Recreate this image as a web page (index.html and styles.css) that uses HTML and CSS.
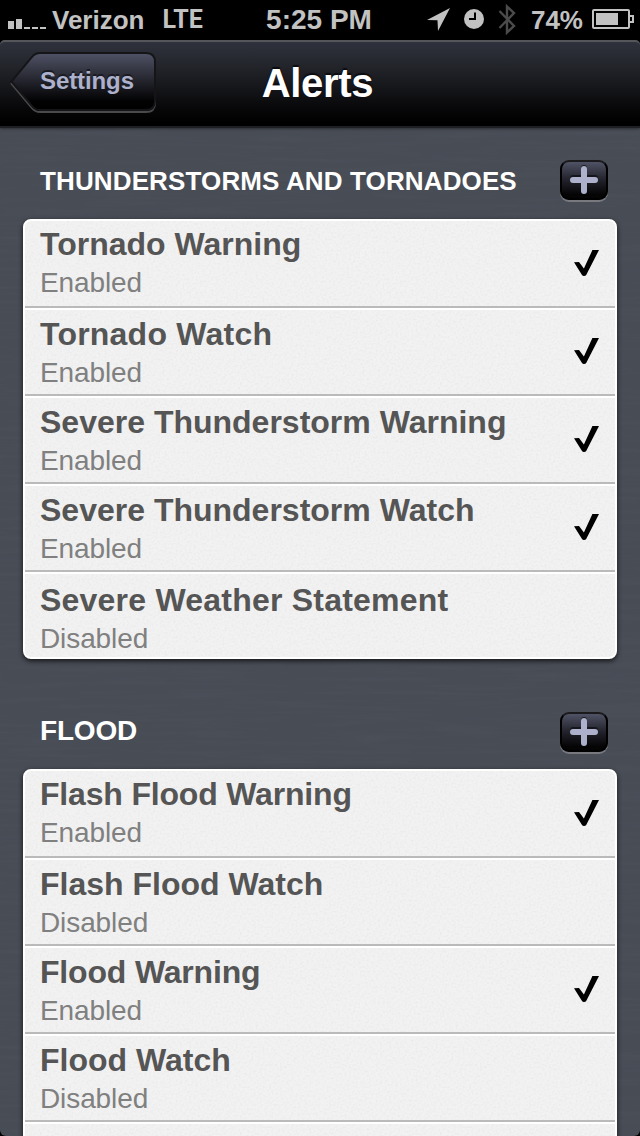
FILE: index.html
```html
<!DOCTYPE html>
<html lang="en">
<head>
  <meta charset="UTF-8" />
  <meta name="viewport" content="width=device-width, initial-scale=1.0"/>
  <title>Alerts</title>
  <link rel="stylesheet" href="styles.css">
</head>
<body>

<svg class="defs" width="0" height="0">
  <defs>
    <linearGradient id="btnFill" x1="0" y1="0" x2="0" y2="1">
      <stop offset="0" stop-color="#505366"/>
      <stop offset="0.5" stop-color="#22232b"/>
      <stop offset="0.85" stop-color="#020203"/>
      <stop offset="1" stop-color="#000"/>
    </linearGradient>
    <symbol id="check" viewBox="0 0 25 26">
      <path d="M0 12.3 L5 12 L9.9 18.6 L18.4 0 H25 L12.2 25 Q11.6 26 10 26 Q8.6 26 8 25 Z"/>
    </symbol>
  </defs>
</svg>

<div class="screen">
  <div class="status-bar">
    <div class="status-left">
      <svg class="signal" width="38" height="10" fill="#c2c2c2">
        <rect x="0" y="2" width="6" height="8"/>
        <rect x="8" y="0" width="6" height="10"/>
        <rect x="16" y="8" width="6" height="2"/>
        <rect x="24" y="8" width="6" height="2"/>
        <rect x="32" y="8" width="6" height="2"/>
      </svg>
      <span class="carrier">Verizon</span>
      <span class="network">LTE</span>
    </div>
    <span class="clock">5:25 PM</span>
    <div class="status-right">
      <svg class="location" width="23" height="23" fill="#c2c2c2">
        <path d="M23 0 L11 23 L10.5 12.3 L0 12 Z"/>
      </svg>
      <svg class="alarm" width="20" height="20">
        <circle cx="10" cy="10" r="10" fill="#c2c2c2"/>
        <path d="M11 3.5 V10 H5" fill="none" stroke="#000" stroke-width="2"/>
      </svg>
      <svg class="bluetooth" width="18" height="31" fill="none" stroke="#4b4b4b" stroke-width="2.4">
        <path d="M1.5 7 L16 22 L9 28.5 V2.5 L16 9 L1.5 24"/>
      </svg>
      <span class="percent">74%</span>
      <svg class="battery" width="42" height="20">
        <rect x="1" y="1" width="36" height="18" rx="1" fill="none" stroke="#c2c2c2" stroke-width="2"/>
        <rect x="4" y="4" width="22" height="12" fill="#c2c2c2"/>
        <path d="M38 7 H41 V13 H38" fill="none" stroke="#c2c2c2" stroke-width="2"/>
      </svg>
    </div>
  </div>

  <div class="nav-bar">
    <a class="back" href="#">
      <svg class="back-shape" width="146" height="61">
        <path d="M1 31 L22 56 Q25 60 30 60 H136 Q145 60 145 51 V30" fill="none" stroke="#4a4a4d" stroke-width="2"/>
        <path d="M1.5 29.5 L22 5 Q25 1 30 1 H136 Q145 1 145 10 V49 Q145 58 136 58 H30 Q25 58 22 54 Z" fill="url(#btnFill)" stroke="#151518" stroke-width="2"/>
      </svg>
      <span>Settings</span>
    </a>
    <h1>Alerts</h1>
  </div>

  <div class="section-header">
    <h2>THUNDERSTORMS AND TORNADOES</h2>
    <button class="add" aria-label="Add"><svg width="28" height="32" fill="none" stroke-width="6" stroke-linecap="round"><path d="M14 4 V24 M3 14 H25" stroke="#15161c"/><path d="M14 5 V27 M3 16 H25" stroke="#adb1cb"/></svg></button>
  </div>
  <ul class="alerts">
    <li><div><h3>Tornado Warning</h3><p>Enabled</p></div><svg class="check"><use href="#check"/></svg></li>
    <li><div><h3 class="wide">Tornado Watch</h3><p>Enabled</p></div><svg class="check"><use href="#check"/></svg></li>
    <li><div><h3>Severe Thunderstorm Warning</h3><p>Enabled</p></div><svg class="check"><use href="#check"/></svg></li>
    <li><div><h3>Severe Thunderstorm Watch</h3><p>Enabled</p></div><svg class="check"><use href="#check"/></svg></li>
    <li><div><h3 class="wide">Severe Weather Statement</h3><p>Disabled</p></div></li>
  </ul>

  <div class="section-header flood">
    <h2>FLOOD</h2>
    <button class="add" aria-label="Add"><svg width="28" height="32" fill="none" stroke-width="6" stroke-linecap="round"><path d="M14 4 V24 M3 14 H25" stroke="#15161c"/><path d="M14 5 V27 M3 16 H25" stroke="#adb1cb"/></svg></button>
  </div>
  <ul class="alerts">
    <li><div><h3 class="tight">Flash Flood Warning</h3><p>Enabled</p></div><svg class="check"><use href="#check"/></svg></li>
    <li><div><h3>Flash Flood Watch</h3><p>Disabled</p></div></li>
    <li><div><h3 class="tight">Flood Warning</h3><p>Enabled</p></div><svg class="check"><use href="#check"/></svg></li>
    <li><div><h3>Flood Watch</h3><p>Disabled</p></div></li>
    <li class="more"><div><h3>Flood Statement</h3></div></li>
  </ul>

  <div class="corners"></div>
</div>

</body>
</html>
```
FILE: styles.css
```css
* {
  box-sizing: border-box;
}

body {
  margin: 0;
  background: #000;
  font-family: "Liberation Sans", Arial, sans-serif;
}

h1, h2, h3, p, ul {
  margin: 0;
  padding: 0;
}

svg {
  display: block;
  flex-shrink: 0;
}

.defs {
  position: absolute;
}

.screen {
  position: relative;
  width: 640px;
  height: 1136px;
  overflow: hidden;
  /* brushed metal */
  background-color: #484c55;
  background-image: url("data:image/svg+xml,%3Csvg xmlns='http://www.w3.org/2000/svg' width='640' height='1136'%3E%3Cfilter id='n' x='0' y='0' width='100%25' height='100%25'%3E%3CfeTurbulence type='fractalNoise' baseFrequency='.012 .22' numOctaves='4' seed='4'/%3E%3CfeColorMatrix values='0 0 0 0 .1 0 0 0 0 .13 0 0 0 0 .16 .9 0 0 0 -.34'/%3E%3C/filter%3E%3Crect width='640' height='1136' filter='url(%23n)' opacity='.3'/%3E%3C/svg%3E");
}

/* status bar */
.status-bar {
  display: grid;
  grid-template-columns: 1fr auto 1fr;
  height: 40px;
  background: #000;
  color: #c2c2c2;
  font-weight: bold;
  line-height: 40px;
}

.status-left {
  display: flex;
  padding-left: 8px;
}

.signal {
  margin-top: 19px;
}

.carrier {
  margin-left: 6px;
  font-size: 26px;
}

.network {
  margin-left: 18px;
  font-family: Roboto, "Liberation Sans", sans-serif;
  font-size: 25px;
}

.clock {
  margin-right: 2px;
  font-size: 28px;
  line-height: 39px;
}

.status-right {
  display: flex;
  justify-content: flex-end;
  padding-right: 6px;
}

.location {
  margin-top: 8px;
}

.alarm {
  margin: 9px 14px 0 14px;
}

.bluetooth {
  margin-top: 4px;
}

.percent {
  margin: 0 9px 0 15px;
  font-size: 26px;
}

.battery {
  margin-top: 9px;
}

/* navigation bar */
.nav-bar {
  display: grid;
  grid-template-columns: 156px 1fr 156px;
  height: 88px;
  border-top: 2px solid #54565a;
  border-bottom: 2px solid #1e1f22;
  border-radius: 5px 5px 0 0;
  background: linear-gradient(#2f323c 0%, #25272e 24%, #18191d 50%, #08080a 78%, #000 96%);
  box-shadow: 0 -5px 0 #000, 0 1px 3px rgba(0, 0, 0, 0.4);
}

.back {
  position: relative;
  margin: 10px 0 0 10px;
  height: 61px;
  padding-left: 30px;
  color: #adb1cb;
  font-size: 24px;
  font-weight: bold;
  line-height: 57px;
  letter-spacing: -0.1px;
  text-decoration: none;
  text-shadow: 0 -2px 0 #1a1b22;
}

.back-shape {
  position: absolute;
  top: 0;
  left: 0;
}

.back span {
  position: relative;
}

.nav-bar h1 {
  color: #fff;
  font-size: 40px;
  line-height: 83px;
  text-align: center;
  text-shadow: 0 -2px 1px #0c0c0f;
  letter-spacing: -0.3px;
  padding-right: 5px;
}

/* section headers */
.section-header {
  display: flex;
  justify-content: space-between;
  align-items: flex-end;
  height: 91px;
  padding: 0 32px 0 40px;
}

.section-header h2 {
  margin-bottom: 23px;
  color: #fff;
  font-size: 26px;
  line-height: 30px;
  letter-spacing: 0.13px;
}

.add {
  display: flex;
  justify-content: center;
  width: 48px;
  height: 40px;
  margin: 0 0 19px;
  padding: 2px 0 0;
  border: 2px solid #000;
  border-top-color: #1b1b1e;
  border-radius: 9px;
  background: linear-gradient(#505366, #25262f 45%, #050506 90%);
  box-shadow: 0 2px 0 #77797f;
}

.flood {
  height: 110px;
}

.flood h2 {
  font-size: 28px;
  letter-spacing: -0.2px;
}

.flood .add {
  margin-bottom: 17px;
}

/* alert lists */
.alerts {
  margin: 0 23px;
  list-style: none;
  border: 2px solid #fff;
  border-radius: 8px;
  background-color: #f2f2f2;
  background-image: url("data:image/svg+xml,%3Csvg xmlns='http://www.w3.org/2000/svg' width='200' height='200'%3E%3Cfilter id='n' x='0' y='0' width='100%25' height='100%25'%3E%3CfeTurbulence type='fractalNoise' baseFrequency='.45' numOctaves='3' stitchTiles='stitch'/%3E%3CfeColorMatrix values='0 0 0 0 .5 0 0 0 0 .5 0 0 0 0 .5 .5 0 0 0 -.2'/%3E%3C/filter%3E%3Crect width='200' height='200' filter='url(%23n)' opacity='.6'/%3E%3C/svg%3E");
  box-shadow: 0 2px 5px rgba(0, 0, 0, 0.75);
}

.alerts li {
  display: flex;
  justify-content: space-between;
  height: 88px;
  padding: 4px 16px 0 15px;
  border-top: 2px solid #fff;
  border-bottom: 2px solid #bababa;
}

.alerts li:first-child {
  height: 87px;
  padding-top: 3px;
  border-top: none;
}

.alerts li:last-child {
  height: 85px;
  padding-top: 6px;
  border-bottom: none;
}

.alerts li.more {
  padding-top: 4px;
}

.alerts h3 {
  color: #555;
  font-size: 32px;
  line-height: 40px;
}

.alerts h3.wide {
  letter-spacing: 0.22px;
}

.alerts h3.tight {
  letter-spacing: -0.18px;
}

.alerts p {
  color: #808080;
  font-size: 28px;
  line-height: 38px;
  letter-spacing: -0.1px;
}

.check {
  width: 25px;
  height: 26px;
  margin-top: 24px;
}

.alerts li:first-child .check {
  margin-top: 26px;
}

/* rounded display corners at the bottom */
.corners {
  position: absolute;
  left: 0;
  right: 0;
  bottom: 0;
  height: 20px;
  border-radius: 0 0 6px 6px;
  box-shadow: 0 6px 0 #000;
  pointer-events: none;
}
```
